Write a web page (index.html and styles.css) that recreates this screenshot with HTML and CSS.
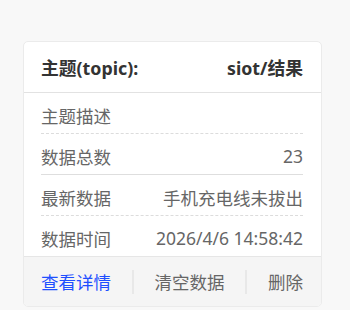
FILE: index.html
```html
<!DOCTYPE html>
<html lang="zh-CN">
<head>
<meta charset="utf-8">
<link rel="stylesheet" href="styles.css">
</head>
<body>
<div class="card">
  <div class="card-header">
    <span class="h-label">主题(topic):</span>
    <span class="h-value">siot/结果</span>
  </div>
  <div class="card-body">
    <div class="row dashed"><span class="label">主题描述</span><span class="value"></span></div>
    <div class="row solid"><span class="label">数据总数</span><span class="value">23</span></div>
    <div class="row dashed"><span class="label">最新数据</span><span class="value">手机充电线未拔出</span></div>
    <div class="row last"><span class="label">数据时间</span><span class="value">2026/4/6 14:58:42</span></div>
  </div>
  <div class="card-footer">
    <span class="action link">查看详情</span>
    <span class="divider"></span>
    <span class="action">清空数据</span>
    <span class="divider"></span>
    <span class="action">删除</span>
  </div>
</div>
</body>
</html>
```
FILE: styles.css
```css
html, body {
  margin: 0;
  padding: 0;
  background: #f8f8f8;
}
body {
  font-family: "Noto Sans", "Noto Sans CJK SC", sans-serif;
  padding: 41px 0 0 23px;
}
.card {
  width: 297px;
  height: 264px;
  background: #fff;
  border: 1px solid #ebebeb;
  border-radius: 5px;
  display: flex;
  flex-direction: column;
  overflow: hidden;
}
.card-header {
  height: 50px;
  flex: none;
  border-bottom: 1px solid #e2e2e2;
  display: flex;
  align-items: center;
  justify-content: space-between;
  padding: 0 18px 0 17px;
  font-size: 17.8px;
  font-weight: 700;
  color: #333;
}
.card-body {
  padding: 0 18px 0 17px;
  flex: none;
}
.row {
  height: 41px;
  box-sizing: border-box;
  display: flex;
  align-items: center;
  justify-content: space-between;
  padding-top: 4px;
  font-size: 17.5px;
  color: #666;
}
.row.dashed { border-bottom: 1px dashed #dcdcdc; }
.row.solid { border-bottom: 1px solid #dedede; }
.row.last { height: 40px; }
.card-footer {
  flex: 1;
  background: #f5f5f5;
  border-top: 1px solid #e6e6e6;
  display: flex;
  align-items: center;
  justify-content: space-between;
  padding: 0 18px 0 17px;
  font-size: 17.5px;
  color: #666;
}
.link { color: #1f4fff; }
.divider {
  width: 2px;
  height: 24px;
  background: #e8e8e8;
}
```
